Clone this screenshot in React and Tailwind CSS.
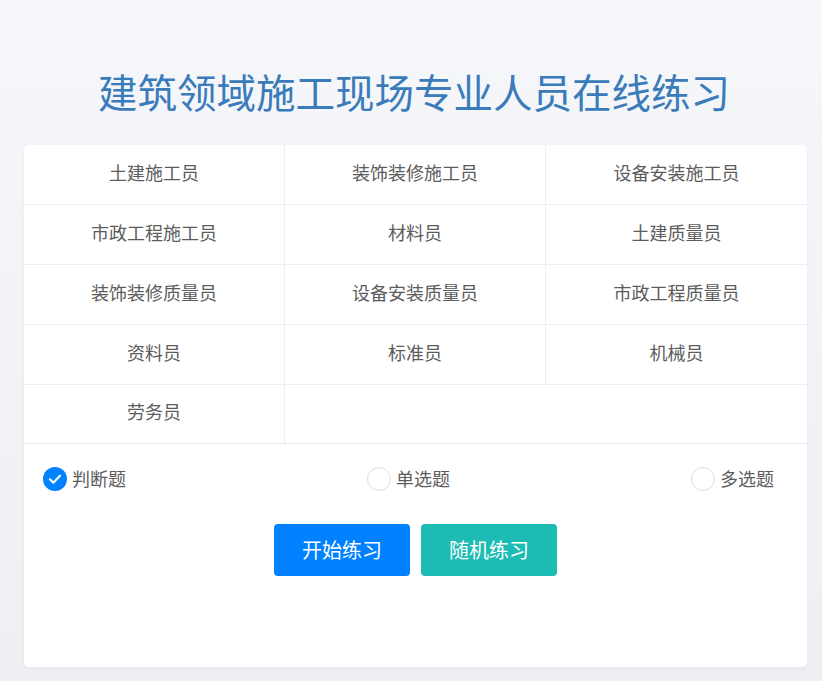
import React, { useState } from 'react';

const roles = [
    '土建施工员', '装饰装修施工员', '设备安装施工员',
    '市政工程施工员', '材料员', '土建质量员',
    '装饰装修质量员', '设备安装质量员', '市政工程质量员',
    '资料员', '标准员', '机械员',
    '劳务员',
];

const types = ['判断题', '单选题', '多选题'];

const Radio = ({ checked, label, onClick }) => (
    <button onClick={onClick} className="flex items-center gap-[5px] h-[24px] cursor-pointer">
        {checked ? (
            <span className="w-[24px] h-[24px] rounded-full bg-[#0081ff] flex items-center justify-center">
                <svg className="w-[16px] h-[16px]" viewBox="0 0 24 24" fill="none" stroke="white" strokeWidth="3.2" strokeLinecap="round" strokeLinejoin="round"><path d="M4.5 12.5l5 5L19.5 7" /></svg>
            </span>
        ) : (
            <span className="w-[24px] h-[24px] rounded-full bg-white border border-[#dcdcdc]"></span>
        )}
        <span className="text-[18px] leading-[24px] text-[#5c5c5c] relative -top-[1px]">{label}</span>
    </button>
);

export default function App() {
    const [type, setType] = useState(0);

    return (
        <div className="min-h-[681px] bg-gradient-to-b from-[#f6f7fa] to-[#eeeff3] pb-[14px]" style={{ fontFamily: '"Noto Sans CJK SC", "Noto Sans", sans-serif' }}>
            <h1 className="pt-[63px] mb-[26px] pl-[6px] text-center text-[39.5px] leading-[56px] text-[#3a7bbb] font-normal">
                建筑领域施工现场专业人员在线练习
            </h1>

            <div className="ml-[24px] w-[783px] h-[522px] bg-white rounded-[5px] shadow-[0_1px_4px_rgba(0,0,0,0.04)]">
                {/* role grid */}
                <div className="grid grid-cols-3 border-b border-dotted border-[#d8d8d8]">
                    {roles.map((r, i) => (
                        <div
                            key={r}
                            className={`flex items-center justify-center pb-[5px] text-[18px] text-[#5c5c5c] ${i % 3 !== 2 ? 'border-r border-[#eeeeee]' : ''} ${i < 12 ? 'h-[60px] border-b border-[#eeeeee]' : 'h-[58px]'}`}
                        >
                            {r}
                        </div>
                    ))}
                </div>

                {/* question type */}
                <div className="flex justify-between pl-[19px] pr-[33px] pt-[23px]">
                    {types.map((t, i) => (
                        <Radio key={t} label={t} checked={type === i} onClick={() => setType(i)} />
                    ))}
                </div>

                <div className="flex justify-center gap-[11px] mt-[33px]">
                    <button className="w-[136px] h-[52px] rounded-[4px] bg-[#0081ff] text-white text-[20px]">开始练习</button>
                    <button className="w-[136px] h-[52px] rounded-[4px] bg-[#1cbbb4] text-white text-[20px]">随机练习</button>
                </div>
            </div>
        </div>
    );
}
